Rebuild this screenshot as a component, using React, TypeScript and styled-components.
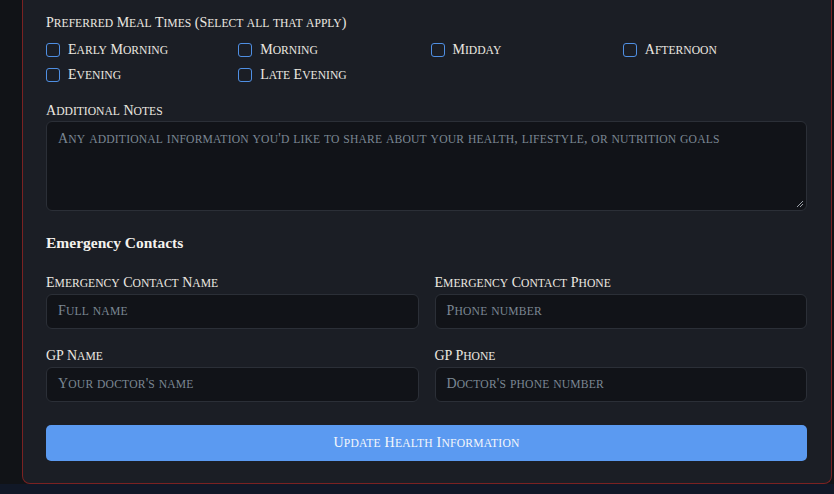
import React from "react";
import styled, { createGlobalStyle } from "styled-components";

const Global = createGlobalStyle`
  html, body { margin: 0; padding: 0; background: #111827; }
  body { font-family: "Liberation Serif", "DejaVu Serif", serif; }
  * { box-sizing: border-box; }
`;

const Shell = styled.div`
  background: #111317;
  padding: 0 2px 0 22px;
  width: 834px;
`;

const Card = styled.section`
  background: #1b1e25;
  border: 1px solid #7a2222;
  border-top: none;
  border-radius: 0 0 8px 8px;
  padding: 14px 24px 22px 23px;
  display: flex;
  flex-direction: column;
`;

const Low = styled.span`
  font-size: 0.83em;
`;

function SC({ text }: { text: string }) {
  const runs = text.match(/[a-z]+|[^a-z]+/g) || [];
  return (
    <>
      {runs.map((r, i) =>
        /[a-z]/.test(r) ? <Low key={i}>{r.toUpperCase()}</Low> : <React.Fragment key={i}>{r}</React.Fragment>
      )}
    </>
  );
}

const Label = styled.div<{ $mb?: number }>`
  font-family: "Liberation Serif", serif;
  font-size: 14px;
  color: #ece8e1;
  line-height: 18px;
  margin-bottom: ${(p) => p.$mb ?? 1}px;
`;

const CheckGrid = styled.div`
  display: grid;
  grid-template-columns: repeat(4, 1fr);
  column-gap: 8px;
  row-gap: 7px;
  margin-top: 8px;
  margin-bottom: 18px;
`;

const CheckItem = styled.label`
  display: flex;
  align-items: center;
  gap: 8px;
  height: 18px;
`;

const Box = styled.span`
  width: 14px;
  height: 14px;
  border: 1.5px solid #4f8fe3;
  border-radius: 3px;
  flex: none;
`;

const CheckText = styled.span`
  font-size: 14px;
  color: #ece8e1;
`;

const TextArea = styled.div`
  position: relative;
  height: 90px;
  background: #111318;
  border: 1px solid #2b2f37;
  border-radius: 6px;
  padding: 7px 11px;
`;

const Placeholder = styled.span`
  font-size: 14px;
  line-height: 18px;
  letter-spacing: 0.18px;
  color: #7b8793;
`;

const Grip = styled.svg`
  position: absolute;
  right: 2px;
  bottom: 2px;
`;

const Heading = styled.h3`
  margin: 22px 0 21px;
  font-family: "Liberation Serif", serif;
  font-weight: 700;
  font-size: 15.5px;
  line-height: 20px;
  color: #f4f2ee;
`;

const FieldGrid = styled.div`
  display: grid;
  grid-template-columns: 1fr 1fr;
  column-gap: 16px;
  row-gap: 18px;
`;

const Field = styled.div`
  display: flex;
  flex-direction: column;
`;

const Input = styled.div`
  height: 35px;
  background: #111318;
  border: 1px solid #2b2f37;
  border-radius: 6px;
  padding: 0 11px;
  display: flex;
  align-items: center;
`;

const Button = styled.button`
  margin-top: 23px;
  height: 36px;
  border: none;
  border-radius: 5px;
  background: #5b9af1;
  color: #f5f7fb;
  font-family: "Liberation Serif", serif;
  font-size: 14px;
  letter-spacing: 0.2px;
`;

const meals = ["Early Morning", "Morning", "Midday", "Afternoon", "Evening", "Late Evening"];

const fields = [
  { label: "Emergency Contact Name", ph: "Full name" },
  { label: "Emergency Contact Phone", ph: "Phone number" },
  { label: "GP Name", ph: "Your doctor's name" },
  { label: "GP Phone", ph: "Doctor's phone number" },
];

export default function App() {
  return (
    <>
      <Global />
      <Shell>
        <Card>
          <Label $mb={0}>
            <SC text="Preferred Meal Times (Select all that apply)" />
          </Label>
          <CheckGrid>
            {meals.map((m) => (
              <CheckItem key={m}>
                <Box />
                <CheckText>
                  <SC text={m} />
                </CheckText>
              </CheckItem>
            ))}
          </CheckGrid>
          <Label $mb={0}>
            <SC text="Additional Notes" />
          </Label>
          <TextArea>
            <Placeholder>
              <SC text="Any additional information you'd like to share about your health, lifestyle, or nutrition goals" />
            </Placeholder>
            <Grip width="8" height="8" viewBox="0 0 8 8">
              <path d="M7 1 L1 7 M7 4 L4 7" stroke="#9aa0a8" strokeWidth="1" />
            </Grip>
          </TextArea>
          <Heading>Emergency Contacts</Heading>
          <FieldGrid>
            {fields.map((f) => (
              <Field key={f.label}>
                <Label>
                  <SC text={f.label} />
                </Label>
                <Input>
                  <Placeholder>
                    <SC text={f.ph} />
                  </Placeholder>
                </Input>
              </Field>
            ))}
          </FieldGrid>
          <Button>
            <SC text="Update Health Information" />
          </Button>
        </Card>
      </Shell>
    </>
  );
}
